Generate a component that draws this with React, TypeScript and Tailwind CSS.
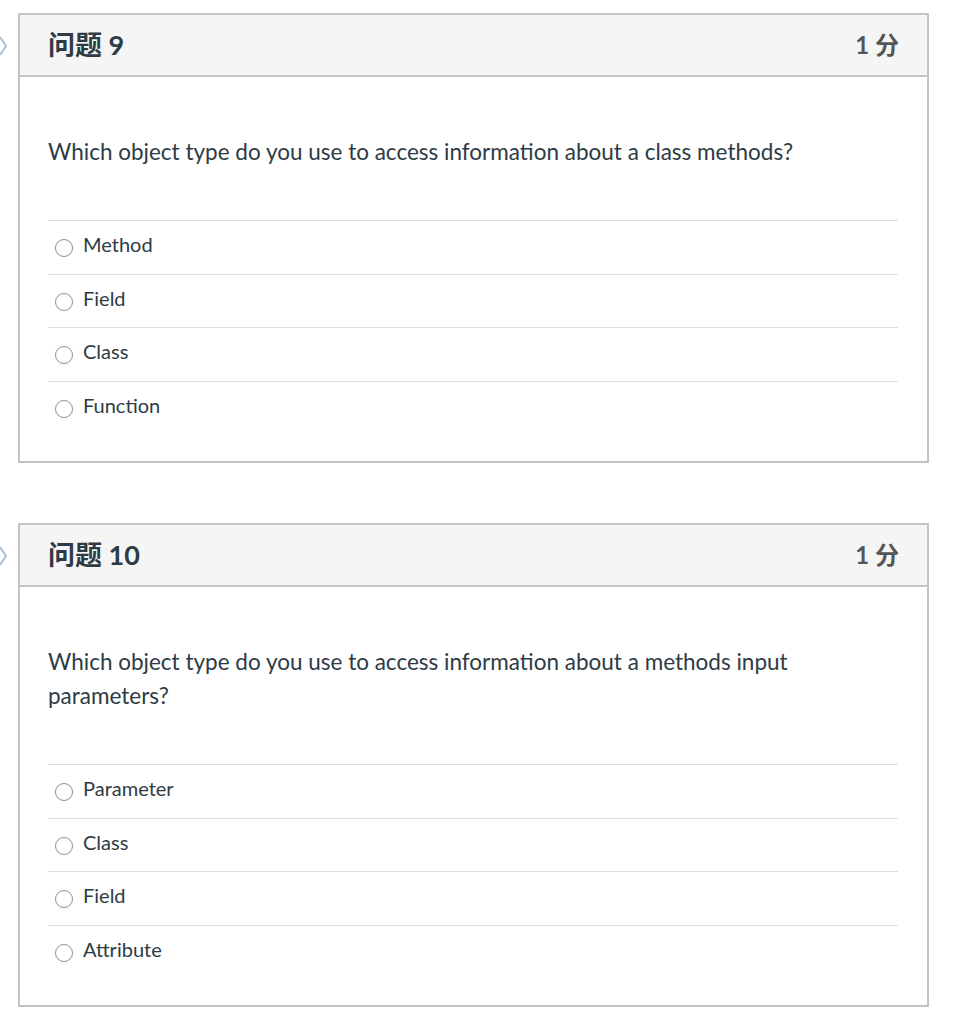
import React from "react";

type Question = {
  num: number;
  points: string;
  text: string;
  answers: string[];
};

const questions: Question[] = [
  {
    num: 9,
    points: "1 分",
    text: "Which object type do you use to access information about a class methods?",
    answers: ["Method", "Field", "Class", "Function"],
  },
  {
    num: 10,
    points: "1 分",
    text: "Which object type do you use to access information about a methods input parameters?",
    answers: ["Parameter", "Class", "Field", "Attribute"],
  },
];

const QuestionCard = ({ q }: { q: Question }) => (
  <div className="relative ml-[18px] w-[911px] border-2 border-[#c4c4c4]">
    {/* flag marker, mostly off-screen */}
    <svg
      className="absolute left-[-20px] top-[21px]"
      width="8"
      height="20"
      viewBox="0 0 8 20"
      fill="none"
    >
      <polyline points="0,1 6,10 0,19" stroke="#a9c0d4" strokeWidth="2" />
    </svg>

    <div className="flex h-[62px] items-center justify-between border-b-2 border-[#c4c4c4] bg-[#f5f5f5] pl-[28px] pr-[28px]">
      <h2 className="text-[27px] font-bold text-[#2d3b45] font-['Lato','Noto_Sans_CJK_SC',sans-serif]">
        问题 {q.num}
      </h2>
      <span className="text-[24px] font-bold text-[#555] font-['Lato','Noto_Sans_CJK_SC',sans-serif]">
        {q.points}
      </span>
    </div>

    <div className="pl-[28px] pr-[29px] pt-[58px] pb-[27px]">
      <p className="text-[22.5px] leading-[34px] text-[#2d3b45]">{q.text}</p>
      <ul className="mt-[51px]">
        {q.answers.map((a) => (
          <li
            key={a}
            className="flex h-[53.5px] items-center gap-[10px] border-t border-[#dcdcdc] pl-[7px]"
          >
            <span className="mt-[2px] h-[18px] w-[18px] rounded-full border border-[#8f8f8f] bg-white" />
            <span className="pb-[6px] text-[20px] text-[#2d3b45]">{a}</span>
          </li>
        ))}
      </ul>
    </div>
  </div>
);

export default function App() {
  return (
    <div className="min-h-screen bg-white pt-[13px] font-['Lato','Noto_Sans_CJK_SC',sans-serif]">
      <div className="flex flex-col gap-[60px]">
        {questions.map((q) => (
          <QuestionCard key={q.num} q={q} />
        ))}
      </div>
    </div>
  );
}
